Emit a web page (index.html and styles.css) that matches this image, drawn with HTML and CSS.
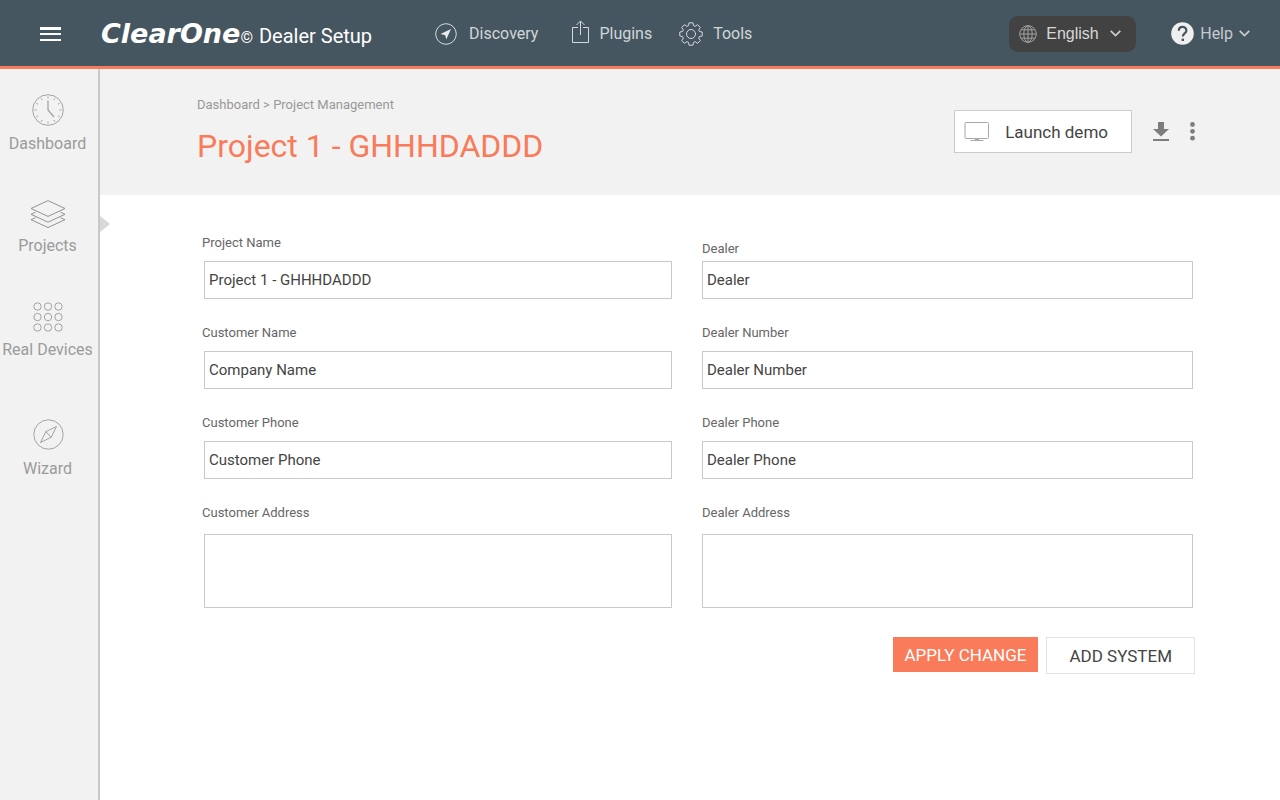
FILE: index.html
```html
<!DOCTYPE html>
<html lang="en">
<head>
<meta charset="utf-8">
<meta name="viewport" content="width=device-width, initial-scale=1">
<title>ClearOne Dealer Setup</title>
<link rel="stylesheet" href="styles.css">
</head>
<body>
<header class="topbar">
  <button class="menu-button" type="button" aria-label="Menu">
    <svg width="21" height="14" viewBox="0 0 21 14" fill="#fff"><path d="M0 0h21v3H0zM0 6h21v2H0zM0 12h21v2H0z"/></svg>
  </button>
  <div class="brand"><span class="brand-name">ClearOne</span><span class="brand-mark">©</span><span class="brand-product">Dealer Setup</span></div>
  <nav class="main-nav" aria-label="Main">
    <a class="nav-link" href="#discovery">
      <svg width="24" height="24" viewBox="0 0 24 24" fill="none" stroke="#d4d9db"><circle cx="11" cy="12" r="10.3"/><path d="M16 7 5.5 12l4.8 1.2.9 4.3z" fill="#e8ebec" stroke="none"/></svg>
      Discovery
    </a>
    <a class="nav-link" href="#plugins">
      <svg width="24" height="24" viewBox="0 0 24 24" fill="none" stroke="#d4d9db"><path d="M13 5.500H7.500v15h16v-15H18M15.500 13V-1M11.500 3l4-4 4 4"/></svg>
      Plugins
    </a>
    <a class="nav-link" href="#tools">
      <svg width="24" height="24" viewBox="0 0 24 24" fill="none" stroke="#d4d9db" stroke-linejoin="round"><circle cx="12" cy="12" r="4.500"/><path d="M10 .8h4l.5 2.800 1.600.7 2.500-1.600 2.700 2.700-1.600 2.500.7 1.600 2.800.5v4l-2.800.5-.7 1.600 1.600 2.500-2.700 2.700-2.500-1.600-1.600.7-.5 2.800h-4l-.5-2.800-1.600-.7-2.500 1.600-2.700-2.700 1.600-2.500-.7-1.600L.8 14v-4l2.800-.5.7-1.600-1.600-2.500 2.700-2.700 2.500 1.600 1.600-.7z"/></svg>
      Tools
    </a>
  </nav>
  <div class="topbar-end">
    <label class="language">
      <svg width="18" height="18" viewBox="0 0 18 18" fill="none" stroke="#a3a3a3"><circle cx="9" cy="9" r="8.300"/><ellipse cx="9" cy="9" rx="4.200" ry="8.300"/><path d="M9 .7v16.600M.7 9h16.600M2 4.800h14M2 13.200h14"/></svg>
      <select class="language-select" aria-label="Language"><option>English</option></select>
      <svg width="11" height="7" viewBox="0 0 11 7" fill="none" stroke="#ccc" stroke-width="1.700"><path d="m.7.800 4.800 4.800L10.300.800"/></svg>
    </label>
    <button class="help" type="button">
      <svg width="23" height="23" viewBox="0 0 23 23"><circle cx="11.500" cy="11.500" r="11.300" fill="#efefef"/><path d="M7.800 8.700c0-5 7.600-4.900 7.600-.3 0 2.900-3.600 3.100-3.600 6" fill="none" stroke="#465660" stroke-width="2.200"/><path d="M10.600 16.600h2.400V19h-2.400z" fill="#465660"/></svg>
      Help
      <svg width="11" height="7" viewBox="0 0 11 7" fill="none" stroke="#ccc" stroke-width="1.700"><path d="m.7.800 4.800 4.800L10.300.800"/></svg>
    </button>
  </div>
</header>
<div class="shell">
  <nav class="sidebar" aria-label="Sections">
    <a class="side-link" href="#dashboard">
      <svg width="32" height="32" viewBox="0 0 32 32" fill="none" stroke="#a3a3a3"><circle cx="16" cy="16" r="15.300"/><path d="M16 6.500V16l6 7" stroke-width="1.300"/><path d="M16 2.500v2M16 27.500v2M2.500 16h2M27.500 16h2M9.250 4.300l1 1.700M21.750 26l1 1.700M4.300 9.250l1.700 1M26 21.750l1.700 1M22.750 4.300l-1 1.700M10.250 26l-1 1.700M27.700 9.250l-1.700 1M6 21.750l-1.700 1"/></svg>
      Dashboard
    </a>
    <a class="side-link side-link-active" href="#projects" aria-current="page">
      <svg width="36" height="28" viewBox="0 0 36 28" fill="none" stroke="#929292"><path d="M18 .6 35 8.500 18 16.400 1 8.500zM5.500 12.200 1 14.300l17 7.900 17-7.900-4.500-2.100M5.500 17.700 1 19.700l17 7.800 17-7.800-4.500-2"/></svg>
      Projects
    </a>
    <a class="side-link" href="#devices">
      <svg width="30" height="30" viewBox="0 0 30 30" fill="none" stroke="#a3a3a3"><circle cx="4.500" cy="4.500" r="3.700"/><circle cx="15" cy="4.500" r="3.700"/><circle cx="25.500" cy="4.500" r="3.700"/><circle cx="4.500" cy="15" r="3.700"/><circle cx="15" cy="15" r="3.700"/><circle cx="25.500" cy="15" r="3.700"/><circle cx="4.500" cy="25.500" r="3.700"/><circle cx="15" cy="25.500" r="3.700"/><circle cx="25.500" cy="25.500" r="3.700"/></svg>
      Real Devices
    </a>
    <a class="side-link side-link-apart" href="#wizard">
      <svg width="32" height="32" viewBox="0 0 32 32" fill="none" stroke="#a3a3a3"><circle cx="16.500" cy="15.500" r="14.700"/><path d="M24.500 7.500 13.800 12.600 8.500 23.500l10.700-5.200zM13.800 12.600l5.400 5.700"/></svg>
      Wizard
    </a>
  </nav>
  <main class="page">
    <section class="hero">
      <div>
        <div class="breadcrumb"><a href="#dashboard">Dashboard</a> &gt; <a href="#projects">Project Management</a></div>
        <h1 class="title">Project 1 - GHHHDADDD</h1>
      </div>
      <div class="hero-actions">
        <button class="launch" type="button">
          <svg width="26" height="20" viewBox="0 0 26 20" fill="none" stroke="#a8a8a8"><rect x="1" y=".5" width="23.500" height="16" rx="1"/><path d="M6.500 18.500h13M11 17.500h4"/></svg>
          Launch demo
        </button>
        <button class="icon-button" type="button" aria-label="Download">
          <svg width="16" height="19" viewBox="0 0 16 19" fill="#7d7d7d"><path d="M5 0h6v7h5l-8 7.500L0 7h5zM0 17h16v2H0z"/></svg>
        </button>
        <button class="icon-button" type="button" aria-label="More options">
          <svg width="5" height="19" viewBox="0 0 5 19" fill="#7d7d7d"><circle cx="2.500" cy="2.500" r="2.400"/><circle cx="2.500" cy="9.300" r="2.400"/><circle cx="2.500" cy="16.200" r="2.400"/></svg>
        </button>
      </div>
    </section>
    <form class="project-form">
      <div class="fields">
        <div class="field field-customer"><label for="project-name">Project Name</label><input id="project-name" type="text" value="Project 1 - GHHHDADDD"></div>
        <div class="field field-tight"><label for="dealer">Dealer</label><input id="dealer" type="text" value="Dealer"></div>
        <div class="field field-customer"><label for="customer-name">Customer Name</label><input id="customer-name" type="text" value="Company Name"></div>
        <div class="field"><label for="dealer-number">Dealer Number</label><input id="dealer-number" type="text" value="Dealer Number"></div>
        <div class="field field-customer"><label for="customer-phone">Customer Phone</label><input id="customer-phone" type="text" value="Customer Phone"></div>
        <div class="field"><label for="dealer-phone">Dealer Phone</label><input id="dealer-phone" type="text" value="Dealer Phone"></div>
        <div class="field field-long field-customer"><label for="customer-address">Customer Address</label><textarea id="customer-address"></textarea></div>
        <div class="field field-long"><label for="dealer-address">Dealer Address</label><textarea id="dealer-address"></textarea></div>
      </div>
      <div class="form-actions">
        <button class="button button-primary" type="button">APPLY CHANGE</button>
        <button class="button button-outline" type="button">ADD SYSTEM</button>
      </div>
    </form>
  </main>
</div>
</body>
</html>
```
FILE: styles.css
```css
* { box-sizing: border-box; }

body {
  margin: 0;
  min-height: 100vh;
  display: flex;
  flex-direction: column;
  background: #fff;
  color: #444;
  font-family: Roboto, "Liberation Sans", sans-serif;
  font-size: 16px;
}

button, input, textarea, select { font: inherit; color: inherit; }
button { padding: 0; border: 0; background: none; cursor: pointer; }
a { color: inherit; text-decoration: none; }
svg { display: block; flex: none; overflow: visible; }

.topbar {
  display: flex;
  align-items: center;
  min-height: 69px;
  padding: 1px 30px 0 40px;
  background: #465660;
  border-bottom: 3px solid #f97b5a;
}

.brand {
  display: flex;
  align-items: baseline;
  margin-left: 40px;
  color: #fff;
  white-space: nowrap;
}
.brand-name {
  font-family: "DejaVu Sans", sans-serif;
  font-size: 27px;
  font-weight: bold;
  font-style: oblique;
}
.brand-mark { font-size: 16px; }
.brand-product { margin-left: 6px; font-size: 20px; }

.main-nav {
  display: flex;
  gap: 27px;
  margin-left: 63px;
}
.nav-link {
  display: flex;
  align-items: center;
  gap: 10px;
  color: #d0d6d9;
}

.topbar-end {
  display: flex;
  align-items: center;
  gap: 35px;
  margin-left: auto;
}
.language {
  display: flex;
  align-items: center;
  height: 36px;
  padding: 0 15px 0 10px;
  border-radius: 9px;
  background: #424242;
}
.language-select {
  width: 64px;
  margin-left: 9px;
  padding: 0;
  border: 0;
  background: none;
  appearance: none;
  color: #d8d8d8;
  font-family: "Liberation Sans", Arial, sans-serif;
}
.help {
  display: flex;
  align-items: center;
  gap: 6px;
  color: #c4cacd;
}

.shell { display: flex; flex: 1; }

.sidebar {
  display: flex;
  flex: none;
  flex-direction: column;
  gap: 46px;
  width: 100px;
  padding: 25px 3px 24px 0;
  background: #f2f2f2;
  border-right: 2px solid #c9c9c9;
}
.side-link {
  position: relative;
  display: flex;
  flex-direction: column;
  align-items: center;
  gap: 8px;
  color: #9b9b9b;
  line-height: 20px;
  white-space: nowrap;
}
.side-link-active::after {
  content: "";
  position: absolute;
  top: 16px;
  right: -15px;
  border: 8px solid transparent;
  border-left: 10px solid #d8d8d8;
  border-right: 0;
}
.side-link-apart { margin-top: 13px; }

.page { flex: 1; min-width: 0; }

.hero {
  display: flex;
  justify-content: space-between;
  align-items: flex-start;
  padding: 26px 85px 29px 97px;
  background: #f2f2f2;
}
.breadcrumb {
  color: #999;
  font-size: 13px;
  line-height: 20px;
}
.title {
  margin: 11px 0 0;
  color: #f97b5a;
  font-size: 32px;
  font-weight: 400;
  line-height: 40px;
}
.hero-actions {
  display: flex;
  align-items: center;
  gap: 21px;
  padding-top: 15px;
}
.launch {
  display: flex;
  align-items: center;
  gap: 15px;
  height: 43px;
  padding: 0 23px 0 9px;
  border: 1px solid #ccc;
  background: #fff;
  font-size: 17px;
}

.project-form { padding: 39px 85px 24px 102px; }
.fields {
  display: grid;
  grid-template-columns: 470fr 491fr;
  gap: 25px 30px;
  padding-right: 2px;
}
.field {
  display: flex;
  flex-direction: column;
  justify-content: flex-end;
  gap: 9px;
  min-width: 0;
}
.field-tight { gap: 3px; }
.field-long { gap: 12px; }
.field label {
  color: #666;
  font-size: 13px;
  line-height: 18px;
}
.field input, .field textarea {
  height: 38px;
  padding: 0 4px;
  border: 1px solid #c9c9c9;
  border-radius: 0;
  background: #fff;
  font-size: 15px;
}
.field textarea { height: 74px; padding: 4px; resize: none; }
.field-customer input, .field-customer textarea { margin-left: 2px; }

.form-actions {
  display: flex;
  justify-content: flex-end;
  align-items: flex-start;
  gap: 8px;
  margin-top: 29px;
}
.button { font-size: 17px; }
.button-primary {
  height: 35px;
  padding: 0 12px;
  background: #f97b5a;
  color: #fff;
}
.button-outline {
  height: 37px;
  padding: 0 22px;
  border: 1px solid #e2e2e2;
}
```
